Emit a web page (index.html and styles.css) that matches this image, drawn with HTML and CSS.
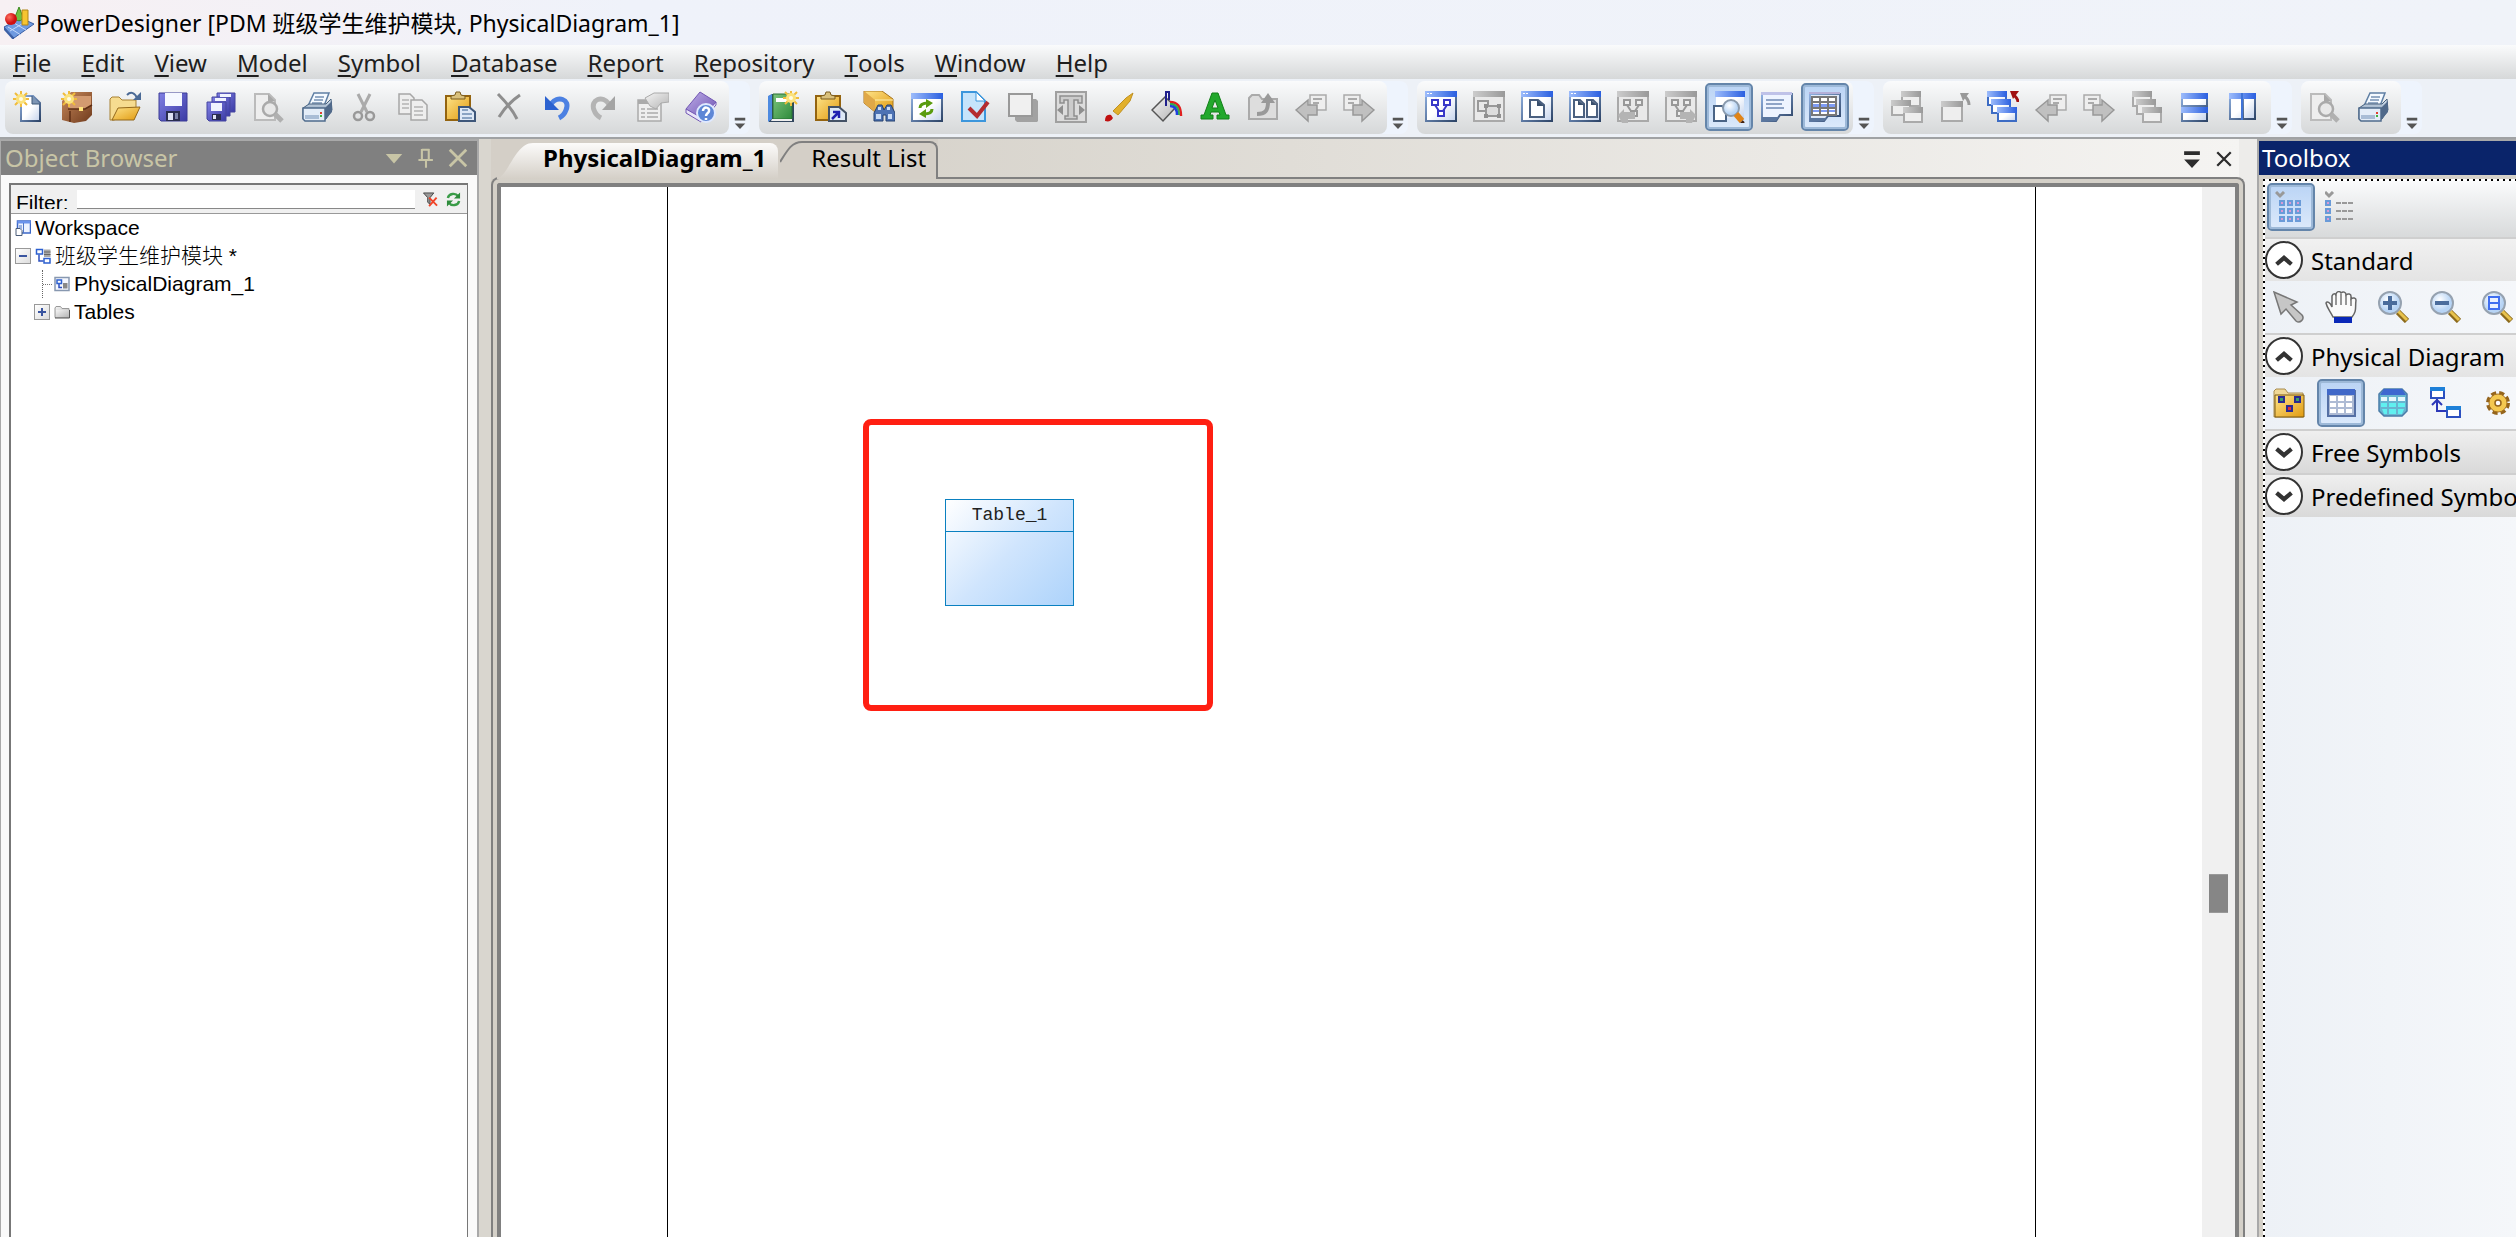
FILE: index.html
```html
<!DOCTYPE html>
<html lang="en">
  <head>
    <meta charset="UTF-8" />
    <meta name="viewport" content="width=device-width, initial-scale=1.0" />
    <title>PowerDesigner [PDM 班级学生维护模块, PhysicalDiagram_1]</title>
    <link rel="stylesheet" href="styles.css">
  </head>
  <body>
    <!-- icon set, all on a 32 x 32 grid -->
    <svg class="defs" width="0" height="0" aria-hidden="true">
      <defs>
        <linearGradient id="gBlue" x2="1"><stop stop-color="#9dbcfb"/><stop offset="1" stop-color="#2a5fe0"/></linearGradient>
        <linearGradient id="gPane" x2="1" y2="1"><stop stop-color="#fff"/><stop offset=".5" stop-color="#fff"/><stop offset="1" stop-color="#c3d2ec"/></linearGradient>
        <linearGradient id="gEdge" x2="1" y2="1"><stop stop-color="#8fb0e0"/><stop offset="1" stop-color="#2e4568"/></linearGradient>
        <linearGradient id="gGrayBar" x2="1"><stop stop-color="#ccc"/><stop offset="1" stop-color="#999"/></linearGradient>
        <linearGradient id="gGray" x2="1" y2="1"><stop stop-color="#f4f4f4"/><stop offset="1" stop-color="#b4b4b4"/></linearGradient>
        <linearGradient id="gGold" x2="1" y2="1"><stop stop-color="#ffe48a"/><stop offset="1" stop-color="#e09a10"/></linearGradient>
        <linearGradient id="gBrown" x2="1" y2="1"><stop stop-color="#c98a5c"/><stop offset="1" stop-color="#6f3a1c"/></linearGradient>
        <linearGradient id="gIndigo" x2="1" y2="1"><stop stop-color="#8080e4"/><stop offset="1" stop-color="#3a3aa4"/></linearGradient>
        <linearGradient id="gSteel" x2="0" y2="1"><stop stop-color="#dde8f4"/><stop offset="1" stop-color="#5b7897"/></linearGradient>
        <linearGradient id="gGreen" x2="1" y2="1"><stop stop-color="#7cc47c"/><stop offset="1" stop-color="#2f8a3c"/></linearGradient>
        <linearGradient id="gPurple" x2="1" y2="1"><stop stop-color="#bfaee8"/><stop offset="1" stop-color="#6a50b0"/></linearGradient>
        <radialGradient id="gRed" cx=".35" cy=".35"><stop stop-color="#ff7060"/><stop offset="1" stop-color="#d01010"/></radialGradient>
        <radialGradient id="gLens" cx=".4" cy=".35"><stop stop-color="#fff"/><stop offset="1" stop-color="#b7d4f5"/></radialGradient>
      </defs>

      <symbol id="star" viewBox="0 0 32 32">
        <path d="M2 2l12 12M14 2L2 14M8 0v16M0 8h16" stroke="#f0bc3c" stroke-width="2" fill="none"/>
        <circle cx="8" cy="8" r="5" fill="#fbe27c"/><circle cx="8" cy="8" r="2" fill="#fffbe0"/>
      </symbol>
      <symbol id="new" viewBox="0 0 32 32">
        <path d="M8 5h12l7 7v18H8z" fill="url(#gPane)" stroke="url(#gEdge)" stroke-width="2"/>
        <path d="M19 5v8h8" fill="#7d95b4" stroke="#3e5878"/>
        <use href="#star" width="32" height="32"/>
      </symbol>
      <symbol id="project" viewBox="0 0 32 32">
        <path d="M1 10L10 1h21v23l-6 6-12 2-12-3z" fill="url(#gBrown)"/>
        <path d="M11 5h19v9l-6 4H7z" fill="#d39a70"/><path d="M7 18h17l7-4M9 31V20" stroke="#5e2e14" stroke-width="1.500" fill="none"/>
        <rect x="18" y="16" width="4" height="4" fill="#ffe27a"/>
        <use href="#star" width="32" height="32"/>
      </symbol>
      <symbol id="open" viewBox="0 0 32 32">
        <path d="M1 8l2-2h7l3 3h14v9L5 29H1z" fill="#f6dc90" stroke="#a78032"/>
        <path d="M9 17l22-1-6 13H3z" fill="url(#gGold)" stroke="#94681a"/>
        <path d="M18 4c4-4 8-2 10 3" fill="none" stroke="#4b6a96" stroke-width="2"/><path d="M32 1v8h-8z" fill="#4b6a96"/>
      </symbol>
      <symbol id="save" viewBox="0 0 32 32">
        <path d="M2 2h28v28H4l-2-2z" fill="url(#gIndigo)" stroke="#3c3c96"/>
        <path d="M8 2h17v13H8z" fill="#f5f8ff"/><path d="M9 20h14v10H9z" fill="#2a2d50"/><path d="M11 22h5v7h-5z" fill="#dfe3f4"/><path d="M18 22h3v6h-3z" fill="#7b82a8"/>
      </symbol>
      <symbol id="saveall" viewBox="0 0 32 32">
        <g fill="url(#gIndigo)" stroke="#4444a0"><path d="M12 2h18v19H12z"/><path d="M7 6h18v19H7z"/><path d="M2 11h19v19H4l-2-2z"/></g>
        <path d="M15 3h11v3H15zM10 7h11v3H10zM6 12h11v8H6z" fill="#f0f3ff"/><path d="M7 23h9v6H7z" fill="#2a2d50"/><path d="M8 24h3v4H8z" fill="#dfe3f4"/>
      </symbol>
      <symbol id="preview" viewBox="0 0 32 32">
        <path d="M2 3h14l6 6v20H2z" fill="#eee" stroke="#bbb" stroke-width="2"/><path d="M15 3v7h7z" fill="#a8a8a8"/>
        <circle cx="17" cy="18" r="7" fill="#e8e8e8" stroke="#aaa" stroke-width="2.500"/><path d="M22 23l7 7" stroke="#b0b0b0" stroke-width="5"/>
      </symbol>
      <symbol id="print" viewBox="0 0 32 32">
        <path d="M13 2h15l-5 13H7z" fill="#f5faff" stroke="#5f7fa4" stroke-width="1.500"/><path d="M14 6h9M13 9h9M11 12h10" stroke="#7691b4" stroke-width="1.500"/>
        <path d="M2 17l6-4h17l5-5 1 11-6 9H2z" fill="url(#gSteel)" stroke="#46617f"/><path d="M2 17h22v13H4l-2-2z" fill="#e4edf8" stroke="#4f6b8c" stroke-width="1.500"/>
        <path d="M24 17l7-7v11l-7 8z" fill="#50698a"/><path d="M4 24h14v4H4z" fill="#a9bdd6"/><path d="M19 21h2v2h-2z" fill="#e04030"/><path d="M19 24h2v2h-2z" fill="#40b040"/>
      </symbol>
      <symbol id="cut" viewBox="0 0 32 32">
        <path d="M9 3l9 18M21 3l-9 18" stroke="#aaa" stroke-width="3" fill="none"/>
        <circle cx="9" cy="25" r="4" fill="none" stroke="#999" stroke-width="2.500"/><circle cx="21" cy="25" r="4" fill="none" stroke="#999" stroke-width="2.500"/>
      </symbol>
      <symbol id="copy" viewBox="0 0 32 32">
        <g fill="#eee" stroke="#a6a6a6" stroke-width="1.500"><path d="M2 3h11l4 4v16H2z"/><path d="M14 9h11l5 5v15H14z"/></g>
        <path d="M5 9h7M5 13h7M5 17h7M17 16h9M17 20h9M17 24h9" stroke="#b4b4b4" stroke-width="1.500"/>
      </symbol>
      <symbol id="paste" viewBox="0 0 32 32">
        <path d="M1 5h24v24H1z" fill="url(#gGold)" stroke="#946410" stroke-width="2"/><path d="M6 8V5l4-1 1-3h4l1 3 4 1v3z" fill="#d9c07c" stroke="#7a5c20"/>
        <path d="M14 16h10l6 5v9H14z" fill="#dde8f6" stroke="#3e577a" stroke-width="2"/><path d="M17 19h6M17 23h10M17 27h10" stroke="#6d8cb2" stroke-width="1.500"/>
      </symbol>
      <symbol id="delete" viewBox="0 0 32 32"><path d="M5 3c7 7 14 15 19 25M27 4C18 10 11 18 6 26" fill="none" stroke="#8e8e8e" stroke-width="3"/></symbol>
      <symbol id="undo" viewBox="0 0 32 32"><path d="M10 13c6-9 20-5 15 6-1 3-3 6-7 8" fill="none" stroke="#4b80e2" stroke-width="5"/><path d="M4 5v14h14z" fill="#2c62d0"/></symbol>
      <symbol id="redo" viewBox="0 0 32 32"><path d="M20 13C14 4 1 8 5 19c1 3 3 6 7 8" fill="none" stroke="#b4b4b4" stroke-width="5"/><path d="M26 5v14H13z" fill="#a4a4a4"/></symbol>
      <symbol id="props" viewBox="0 0 32 32">
        <path d="M1 9h23v21H1z" fill="#eee" stroke="#aaa" stroke-width="1.500"/><path d="M1 9h23v4H1z" fill="#aaa"/>
        <path d="M4 18h4M10 18h11M4 22h4M10 22h11M4 26h4M10 26h11" stroke="#bbb" stroke-width="2"/><path d="M8 7l9-5h15v9l-8 1-5 6-6-3z" fill="url(#gGray)" stroke="#aaa"/>
      </symbol>
      <symbol id="help" viewBox="0 0 32 32">
        <path d="M1 18L15 1l16 10-14 17z" fill="url(#gPurple)" stroke="#7358b4"/><path d="M1 18v4l15 9 15-17v-3L17 27z" fill="#e9e4f8" stroke="#7358b4"/>
        <circle cx="21" cy="22" r="9" fill="#5e87d6" stroke="#dfe9ff" stroke-width="2"/><path d="M18 20c0-5 7-4 6 0 0 2-3 2-3 5M21 27v2" fill="none" stroke="#fff" stroke-width="2.500"/>
      </symbol>

      <symbol id="model" viewBox="0 0 32 32">
        <path d="M2 5l3-2h22v28H2z" fill="#32465e"/><path d="M1 5l4-2v25l-4 3z" fill="#4d8ae0"/><path d="M6 3h19v25H6z" fill="url(#gGreen)" stroke="#286e34"/>
        <path d="M9 7h12v4H9z" fill="#fff"/><path d="M5 28h20v2H4z" fill="#eee"/><g transform="translate(16 -1)"><use href="#star" width="32" height="32"/></g>
      </symbol>
      <symbol id="pastelink" viewBox="0 0 32 32">
        <path d="M1 5h24v24H1z" fill="url(#gGold)" stroke="#946410" stroke-width="2"/><path d="M6 8V5l4-1 1-3h4l1 3 4 1v3z" fill="#d9c07c" stroke="#7a5c20"/>
        <path d="M14 16h10l7 6v8H14z" fill="#dde8f6" stroke="#445266" stroke-width="2"/><path d="M17 28l6-6M18 21h6v6" fill="none" stroke="#2020b0" stroke-width="2.500"/>
      </symbol>
      <symbol id="find" viewBox="0 0 32 32">
        <path d="M1 0h18l11 8v13H12L1 12z" fill="url(#gGold)" stroke="#a8741c"/><path d="M1 0l11 9v12L1 12z" fill="#e0a848"/><path d="M12 9h18" stroke="#fff0b0"/>
        <path d="M11 30V22l4-8h4l2 5 3-5h4l4 8v8h-9v-6h-3v6z" fill="#4d72b4" stroke="#24406e"/><path d="M13 23h5v5h-5zM25 23h4v5h-4zM15 16h3v3h-3zM24 16h3v3h-3z" fill="#c9dcf6"/>
      </symbol>
      <symbol id="pane" viewBox="0 0 32 32">
        <path d="M1 1h30v29H1z" fill="url(#gPane)" stroke="url(#gEdge)" stroke-width="2"/><path d="M0 0h32v6H0z" fill="url(#gBlue)"/><path d="M2 2h2v1H2zM5 2h2v1H5z" fill="#fff"/>
      </symbol>
      <symbol id="panegray" viewBox="0 0 32 32">
        <path d="M1 1h30v29H1z" fill="#e9e9e9" stroke="#a9a9a9" stroke-width="2"/><path d="M0 0h32v6H0z" fill="url(#gGrayBar)"/>
      </symbol>
      <symbol id="refresh" viewBox="0 0 32 32">
        <path d="M1 3h30v27H1z" fill="url(#gPane)" stroke="url(#gEdge)" stroke-width="2"/><path d="M0 2h32v6H0z" fill="url(#gBlue)"/>
        <path d="M9 17c0-4 3-5 8-5M21 18c0 4-3 5-8 5" fill="none" stroke="#5a9c10" stroke-width="3"/><path d="M15 8l7 4-7 5zM15 18v9l-7-4z" fill="#5a9c10"/>
      </symbol>
      <symbol id="check" viewBox="0 0 32 32">
        <path d="M3 1h14l9 9v20H3z" fill="#c6e4fb" stroke="#3c96dc" stroke-width="2"/><path d="M17 1v9h9z" fill="#fff" stroke="#3c96dc"/><path d="M10 17l8 8L29 11" fill="none" stroke="#b42c30" stroke-width="4"/>
      </symbol>
      <symbol id="shadow" viewBox="0 0 32 32"><path d="M8 8h21l2 2v20l-1 1H10l-2-2z" fill="#a2a2a2"/><path d="M2 3h23v22H2z" fill="#f0f0f0" stroke="#999" stroke-width="2"/></symbol>
      <symbol id="textfit" viewBox="0 0 32 32">
        <path d="M1 1h30v30H1z" fill="#dcdcdc" stroke="#a0a0a0" stroke-width="2"/><path d="M5 5h22v7h-4V9h-4v16h3v3H10v-3h3V9H9v3H5z" fill="#ccc" stroke="#8e8e8e" stroke-width="1.500"/><path d="M8 14v10l-6-5zM24 14v10l6-5z" fill="#8e8e8e"/>
      </symbol>
      <symbol id="brush" viewBox="0 0 32 32">
        <path d="M10 20L23 7l7-5-3 8-12 14z" fill="#e2b02c" stroke="#c09020"/><path d="M8 21l6 5-4 3-4-4z" fill="#e4e4e4"/><path d="M2 30c0-5 2-7 6-6l2 3c-2 3-4 4-8 3z" fill="#c01010"/>
      </symbol>
      <symbol id="fill" viewBox="0 0 32 32">
        <path d="M1 19L14 6l11 10-13 14z" fill="url(#gGray)" stroke="#555" stroke-width="1.500"/><path d="M15 15V1h3v8" fill="none" stroke="#20208c" stroke-width="2"/>
        <path d="M19 11c8 0 11 5 11 14" fill="none" stroke="#e02020" stroke-width="2.500"/><path d="M19 13c6 0 9 4 9 11" fill="none" stroke="#30b050" stroke-width="2"/><path d="M19 15c5 0 7 3 7 9" fill="none" stroke="#2040e0" stroke-width="2.500"/>
      </symbol>
      <symbol id="font" viewBox="0 0 32 32">
        <path d="M13 2h6l8 22h3v4H18v-4h3l-1-3h-8l-1 3h3v4H2v-4h3zM13 17h6l-3-8z" fill="#22a82c" stroke="#128018" fill-rule="evenodd"/>
      </symbol>
      <symbol id="folderup" viewBox="0 0 32 32"><path d="M2 7l3-3h7l3 4h15v20H2z" fill="#ddd" stroke="#aaa" stroke-width="2"/><path d="M10 23c8 0 11-3 11-12" fill="none" stroke="#999" stroke-width="4"/><path d="M14 12l7-10 7 10z" fill="#999"/></symbol>
      <symbol id="prev" viewBox="0 0 32 32"><path d="M15 4h16v15H15z" fill="#eee" stroke="#aaa" stroke-width="1.500"/><path d="M18 8h9M18 12h6" stroke="#aaa" stroke-width="2"/><path d="M1 19L13 9v5h9v10h-9v6z" fill="#c0c0c0" stroke="#989898" stroke-width="1.500"/></symbol>
      <symbol id="next" viewBox="0 0 32 32"><path d="M1 4h16v15H1z" fill="#eee" stroke="#aaa" stroke-width="1.500"/><path d="M5 8h9M5 12h6" stroke="#aaa" stroke-width="2"/><path d="M31 19L19 9v5h-9v10h9v6z" fill="#c0c0c0" stroke="#989898" stroke-width="1.500"/></symbol>

      <symbol id="graph" viewBox="0 0 32 32">
        <use href="#pane" width="32" height="32"/><path d="M10 14l4 6M22 14l-4 6" stroke="#3838c8" stroke-width="2"/><g fill="#fff" stroke="#3838c8" stroke-width="2"><path d="M7 9h6v5H7zM19 9h6v5h-6zM13 20h6v5h-6z"/></g>
      </symbol>
      <symbol id="graphgray" viewBox="0 0 32 32">
        <use href="#panegray" width="32" height="32"/><path d="M5 10h10v10H5z" fill="none" stroke="#999" stroke-width="2"/><path d="M13 15h13v10H13z" fill="#ddd" stroke="#999" stroke-width="2"/><path d="M11 13h4v4h-4zM24 13h4v4h-4zM11 23h4v4h-4zM24 23h4v4h-4z" fill="#909090"/>
      </symbol>
      <symbol id="page" viewBox="0 0 32 32"><use href="#pane" width="32" height="32"/><path d="M9 9h8l6 5v12H9z" fill="#fff" stroke="#4a6080" stroke-width="2"/><path d="M16 9v6h7z" fill="#3a506e"/></symbol>
      <symbol id="pages" viewBox="0 0 32 32"><use href="#pane" width="32" height="32"/><path d="M5 9h6l4 4v13H5zM18 9h6l4 4v13H18z" fill="#fff" stroke="#4a6080" stroke-width="2"/><path d="M9 9v5h6zM22 9v5h6z" fill="#3a506e"/></symbol>
      <symbol id="graphleft" viewBox="0 0 32 32"><use href="#panegray" width="32" height="32"/><path d="M10 14l4 6M22 14l-4 6" stroke="#999" stroke-width="2"/><path d="M7 9h6v5H7zM19 9h6v5h-6zM14 20h6v5h-6z" fill="#eee" stroke="#999" stroke-width="2"/><path d="M1 24l6-6v3h11v7h-7v4H5z" fill="#b4b4b4"/></symbol>
      <symbol id="graphright" viewBox="0 0 32 32"><use href="#panegray" width="32" height="32"/><path d="M10 14l4 6M22 14l-4 6" stroke="#999" stroke-width="2"/><path d="M7 9h6v5H7zM19 9h6v5h-6zM12 20h6v5h-6z" fill="#eee" stroke="#999" stroke-width="2"/><path d="M31 24l-6-6v3H15v7h6v4h6z" fill="#b4b4b4"/></symbol>
      <symbol id="zoompage" viewBox="0 0 32 32">
        <g transform="translate(2 0)"><path d="M1 1h28v26H1z" fill="url(#gPane)"/><path d="M0 0h30v6H0z" fill="url(#gBlue)"/></g><path d="M1 15h8l4 4v11H1z" fill="#fff" stroke="#4a6486" stroke-width="2"/>
        <circle cx="18" cy="17" r="8" fill="url(#gLens)" stroke="#8a9aac" stroke-width="2"/><path d="M23 23l6 7" stroke="#e08418" stroke-width="6"/><path d="M28 31l2 2" stroke="#402010" stroke-width="5"/>
      </symbol>
      <symbol id="note" viewBox="0 0 32 32"><path d="M1 3h30v21H19l-4 6H1z" fill="#eef4ff" stroke="url(#gEdge)" stroke-width="2"/><path d="M1 26h17l-3 4H1z" fill="#5a769e"/><path d="M0 1h31v3H0z" fill="#bfc2e8"/><path d="M5 9h18M5 13h16M5 17h18" stroke="#8fa4c6" stroke-width="2"/></symbol>
      <symbol id="grid" viewBox="0 0 32 32"><path d="M1 3h30v22H19l-4 5H1z" fill="#dfe9f8" stroke="url(#gEdge)" stroke-width="2"/><path d="M1 27h17l-3 3H1z" fill="#5a769e"/><path d="M0 1h31v2H0z" fill="#b4b0d8"/><path d="M3 6h24v18H3z" fill="#fff"/><path d="M3 13h24v3H3zM3 19h24v2H3z" fill="#7f9cf4"/><path d="M3 6h24v18H3zM11 6v18M19 6v18M3 11h24M3 17h24" fill="none" stroke="#777" stroke-width="2"/></symbol>

      <symbol id="wingray" viewBox="0 0 32 32"><path d="M1 1h18v14H1z" fill="#eee" stroke="#aaa" stroke-width="2"/><path d="M0 0h20v6H0z" fill="url(#gGrayBar)"/></symbol>
      <symbol id="winblue" viewBox="0 0 32 32"><path d="M1 1h18v13H1z" fill="url(#gPane)" stroke="#3d6cc4" stroke-width="2"/><path d="M0 0h20v6H0z" fill="url(#gBlue)"/></symbol>
      <symbol id="cascadegray" viewBox="0 0 32 32"><use href="#wingray" x="10" y="0" width="32" height="32"/><use href="#wingray" x="0" y="9" width="32" height="32"/><use href="#wingray" x="12" y="16" width="32" height="32"/></symbol>
      <symbol id="winup" viewBox="0 0 32 32"><path d="M3 12h20v18H3z" fill="#eee" stroke="#aaa" stroke-width="2"/><path d="M2 10h22v6H2z" fill="url(#gGrayBar)"/><path d="M30 14c0-4-2-7-5-9" fill="none" stroke="#999" stroke-width="3"/><path d="M21 2h9l-6 8z" fill="#999"/></symbol>
      <symbol id="cascadered" viewBox="0 0 32 32"><use href="#winblue" x="0" y="0" width="32" height="32"/><use href="#winblue" x="4" y="8" width="32" height="32"/><use href="#winblue" x="10" y="16" width="32" height="32"/><path d="M31 11c0-3-2-5-4-7" fill="none" stroke="#a01010" stroke-width="3"/><path d="M23 0h9l-6 8z" fill="#a01010"/></symbol>
      <symbol id="stackgray" viewBox="0 0 32 32"><use href="#wingray" x="1" y="0" width="32" height="32"/><use href="#wingray" x="5" y="8" width="32" height="32"/><use href="#wingray" x="11" y="16" width="32" height="32"/></symbol>
      <symbol id="tileh" viewBox="0 0 32 32"><path d="M3 3h25v12H3zM3 18h25v12H3z" fill="url(#gPane)" stroke="url(#gEdge)" stroke-width="2"/><path d="M2 2h27v6H2zM2 16h27v6H2z" fill="url(#gBlue)"/></symbol>
      <symbol id="tilev" viewBox="0 0 32 32"><path d="M3 3h12v25H3zM16 3h12v25H16z" fill="url(#gPane)" stroke="url(#gEdge)" stroke-width="2"/><path d="M2 2h27v6H2z" fill="url(#gBlue)"/><path d="M15 2v27" stroke="#3f74d8" stroke-width="2"/></symbol>

      <symbol id="viewicons" viewBox="0 0 32 32"><path d="M1 1l4 4 4-4" fill="none" stroke="#999" stroke-width="3"/><g fill="#d99ad4" stroke="#6a9bd8" stroke-width="2"><path d="M5 10h4v4H5zM13 10h4v4h-4zM21 10h4v4h-4zM5 18h4v4H5zM13 18h4v4h-4zM21 18h4v4h-4zM5 26h4v4H5zM13 26h4v4h-4zM21 26h4v4h-4z"/></g></symbol>
      <symbol id="viewlist" viewBox="0 0 32 32"><path d="M0 1l4 4 4-4" fill="none" stroke="#999" stroke-width="3"/><g fill="#d99ad4" stroke="#6a9bd8" stroke-width="2"><path d="M1 10h4v4H1zM1 18h4v4H1zM1 26h4v4H1z"/></g><path d="M11 12h18M11 20h18M11 28h18" stroke="#999" stroke-width="2" stroke-dasharray="5 1"/></symbol>
      <symbol id="pointer" viewBox="0 0 32 32"><path d="M1 1l7 22 5-5 10 12c4 3 9-2 6-6L18 14l6-3z" fill="#c6c6c6" stroke="#777" stroke-width="1.500"/></symbol>
      <symbol id="hand" viewBox="0 0 32 32"><path d="M8 26C5 20 2 17 1 12c1-2 4-1 6 4V5c1-3 4-3 4 0V3c1-3 4-3 5-1 2-2 5-1 5 2 2-2 5-1 5 1v3c2-2 5-1 5 1-1 8 1 11-4 17z" fill="#fafafa" stroke="#666" stroke-width="1.500"/><path d="M11 5v9M16 3v11M21 4v10M26 8v7" stroke="#777" stroke-width="1.500"/><path d="M9 26h18v6H9z" fill="#0a28b8"/></symbol>
      <symbol id="lens" viewBox="0 0 32 32"><path d="M21 21l9 9" stroke="#8c6a1c" stroke-width="6"/><path d="M21 20l9 9" stroke="#e8c24c" stroke-width="3"/><circle cx="13" cy="12" r="11" fill="url(#gLens)" stroke="#96a2b0" stroke-width="2"/></symbol>
      <symbol id="zoomin" viewBox="0 0 32 32"><use href="#lens" width="32" height="32"/><path d="M6 12h14M13 5v14" stroke="#4a6c9c" stroke-width="4"/></symbol>
      <symbol id="zoomout" viewBox="0 0 32 32"><use href="#lens" width="32" height="32"/><path d="M6 12h14" stroke="#4a6c9c" stroke-width="4"/></symbol>
      <symbol id="zoomfit" viewBox="0 0 32 32"><use href="#lens" width="32" height="32"/><path d="M8 6h10v12H8zM8 12h10" fill="#eaf1ff" stroke="#3f6ef0" stroke-width="2"/></symbol>
      <symbol id="package" viewBox="0 0 32 32"><path d="M1 4l2-2h9l3 4h15v24H1z" fill="#f0d898" stroke="#a88c50"/><path d="M2 8h29v22H2z" fill="url(#gGold)" stroke="#7a5810"/><path d="M6 10h5v5H6zM22 10h5v5h-5z" fill="#3aa06a" stroke="#2a2a90" stroke-width="2"/><path d="M14 19h5v5h-5z" fill="#e03030" stroke="#2a2a90" stroke-width="2"/></symbol>
      <symbol id="table" viewBox="0 0 32 32"><path d="M3 4h27v25H3z" fill="#aebbd4" stroke="#5570a4" stroke-width="2"/><path d="M2 2h28v6H2z" fill="#4068c8"/><path d="M5 9h6v5H5zM13 9h6v5h-6zM21 9h6v5h-6zM5 16h6v4H5zM13 16h6v4h-6zM21 16h6v4h-6zM5 22h6v4H5zM13 22h6v4h-6zM21 22h6v4h-6z" fill="#fff"/></symbol>
      <symbol id="view" viewBox="0 0 32 32"><path d="M7 2h18l5 5v17l-5 5H7l-5-5V7z" fill="#68b4d0" stroke="#4a7ca8" stroke-width="1.500"/><path d="M7 2h18l4 6H3z" fill="#3d68d0"/><path d="M4 10h6v4H4zM12 10h7v4h-7zM21 10h7v4h-7z" fill="#e4f8fc"/><path d="M4 16h6v4H4zM12 16h7v4h-7zM21 16h7v4h-7zM5 22h5v5H7zM12 22h7v5h-7zM21 22h6l-2 5h-4z" fill="#60f0f0"/></symbol>
      <symbol id="reference" viewBox="0 0 32 32"><path d="M8 12v12h9M3 18l5-5 5 5" fill="none" stroke="#2c38b8" stroke-width="2"/><g fill="#fff" stroke="#2c50c0" stroke-width="2"><path d="M2 1h13v10H2zM18 20h13v10H18z"/></g><path d="M1 0h15v4H1zM17 19h15v4H17z" fill="#1e80d8"/></symbol>
      <symbol id="gear" viewBox="0 0 32 32"><circle cx="17" cy="16" r="10" fill="none" stroke="#94641c" stroke-width="4" stroke-dasharray="5 3"/><circle cx="17" cy="16" r="9" fill="#f4c850" stroke="#a87420"/><circle cx="17" cy="16" r="3" fill="#fff" stroke="#94641c" stroke-width="1.500"/></symbol>

      <symbol id="app" viewBox="0 0 32 32">
        <path d="M2 20l17-9 13 6-20 14z" fill="#6f9ae0" stroke="#3a5ea4"/><path d="M6 20l13 8M12 16l12 7M8 24l17-10" stroke="#c4d8fa"/><path d="M2 20l10 11v3L2 23z" fill="#3a5ea4"/>
        <path d="M13 10l4-10 4 10c0 5-8 5-8 0z" fill="#6fc040" stroke="#3c8a20"/><path d="M20 3h6v15h-6z" fill="#f6c430" stroke="#b08418"/><circle cx="9" cy="12" r="6" fill="url(#gRed)"/>
      </symbol>
      <symbol id="pin" viewBox="0 0 32 32"><path d="M10 3v15M10 4h11M20 3v15M5 19h21M16 19v11" fill="none" stroke="currentColor" stroke-width="3"/></symbol>
      <symbol id="cross" viewBox="0 0 32 32"><path d="M4 4l24 24M28 4L4 28" fill="none" stroke="currentColor" stroke-width="4"/></symbol>
      <symbol id="down" viewBox="0 0 32 32"><path d="M4 10h24L16 24z" fill="currentColor"/></symbol>
      <symbol id="more" viewBox="0 0 32 32"><path d="M2 2h28v7H2zM2 17h28L16 32z" fill="currentColor"/></symbol>
      <symbol id="nofilter" viewBox="0 0 32 32"><path d="M1 2h22l-8 10v14l-5-4V12z" fill="#999" stroke="#444" stroke-width="2"/><path d="M13 12l17 17M29 12L13 30" stroke="#f04428" stroke-width="4"/></symbol>
      <symbol id="reload" viewBox="0 0 32 32"><path d="M4 13C6 3 20 1 26 9M28 19c-2 10-16 12-22 4" fill="none" stroke="#3a9c48" stroke-width="5"/><path d="M30 1v13H17zM2 31V18h13z" fill="#2e8c3c"/></symbol>
      <symbol id="workspace" viewBox="0 0 32 32"><path d="M5 2h26v24H5z" fill="#eef3ff" stroke="#3c68c8" stroke-width="3"/><path d="M5 2h26v5H5z" fill="#6c94ec"/><path d="M17 6v20M8 12h6M8 16h6" stroke="#5078c8" stroke-width="2"/><path d="M2 17h8l4 4v10H2z" fill="#fff" stroke="#4a5c78" stroke-width="2"/></symbol>
      <symbol id="pdm" viewBox="0 0 32 32"><path d="M8 13v13h9" fill="none" stroke="#2c50c0" stroke-width="3"/><path d="M3 3h12v9H3zM18 21h12v9H18z" fill="#fff" stroke="#2c60d0" stroke-width="3"/><path d="M18 3h13v15H18z" fill="#a8a8a8"/><path d="M18 8h13M18 13h13" stroke="#666" stroke-width="2"/></symbol>
      <symbol id="diagram" viewBox="0 0 32 32"><path d="M2 3h28v26H2z" fill="#f4f7ff" stroke="#8898b0" stroke-width="3"/><path d="M6 8h9v7H6z" fill="#fff" stroke="#2c60d0" stroke-width="3"/><path d="M10 16v7h6" fill="none" stroke="#2c50c0" stroke-width="3"/><path d="M18 14h9v11h-9z" fill="#888"/></symbol>
      <symbol id="folder" viewBox="0 0 32 32"><path d="M2 27V8l2-3h9l3 4h14v18z" fill="url(#gGray)" stroke="#999" stroke-width="2"/><path d="M4 12h26v15H4z" fill="url(#gGray)"/><path d="M2 28h29V12" fill="none" stroke="#555" stroke-width="2"/></symbol>
      <symbol id="plus" viewBox="0 0 32 32"><path d="M8 16h16M16 8v16" stroke="#3a55a0" stroke-width="4"/></symbol>
      <symbol id="minus" viewBox="0 0 32 32"><path d="M8 16h16" stroke="#3a55a0" stroke-width="4"/></symbol>
      <symbol id="chevup" viewBox="0 0 32 32"><path d="M9 20l7-6 7 6" fill="none" stroke="#333" stroke-width="4"/></symbol>
      <symbol id="chevdown" viewBox="0 0 32 32"><path d="M9 13l7 6 7-6" fill="none" stroke="#333" stroke-width="4"/></symbol>
    </svg>

    <header class="titlebar">
      <svg class="icon"><use href="#app"/></svg>
      <h1>PowerDesigner [PDM 班级学生维护模块, PhysicalDiagram_1]</h1>
    </header>

    <nav class="menubar">
      <button><u>F</u>ile</button>
      <button><u>E</u>dit</button>
      <button><u>V</u>iew</button>
      <button><u>M</u>odel</button>
      <button><u>S</u>ymbol</button>
      <button><u>D</u>atabase</button>
      <button><u>R</u>eport</button>
      <button><u>R</u>epository</button>
      <button><u>T</u>ools</button>
      <button><u>W</u>indow</button>
      <button><u>H</u>elp</button>
    </nav>

    <div class="toolbars">
      <div class="toolbar">
        <div class="strip">
          <button class="tool" title="New Model"><svg class="icon"><use href="#new"/></svg></button>
          <button class="tool" title="New Project"><svg class="icon"><use href="#project"/></svg></button>
          <button class="tool" title="Open"><svg class="icon"><use href="#open"/></svg></button>
          <button class="tool" title="Save"><svg class="icon"><use href="#save"/></svg></button>
          <button class="tool" title="Save All"><svg class="icon"><use href="#saveall"/></svg></button>
          <button class="tool" title="Print Preview"><svg class="icon"><use href="#preview"/></svg></button>
          <button class="tool" title="Print"><svg class="icon"><use href="#print"/></svg></button>
          <button class="tool" title="Cut"><svg class="icon"><use href="#cut"/></svg></button>
          <button class="tool" title="Copy"><svg class="icon"><use href="#copy"/></svg></button>
          <button class="tool" title="Paste"><svg class="icon"><use href="#paste"/></svg></button>
          <button class="tool" title="Delete"><svg class="icon"><use href="#delete"/></svg></button>
          <button class="tool" title="Undo"><svg class="icon"><use href="#undo"/></svg></button>
          <button class="tool" title="Redo"><svg class="icon"><use href="#redo"/></svg></button>
          <button class="tool" title="Properties"><svg class="icon"><use href="#props"/></svg></button>
          <button class="tool" title="Help"><svg class="icon"><use href="#help"/></svg></button>
        </div>
        <button class="overflow" title="Toolbar Options"><svg><use href="#more"/></svg></button>
      </div>
      <div class="toolbar">
        <div class="strip">
          <button class="tool" title="Model Properties"><svg class="icon"><use href="#model"/></svg></button>
          <button class="tool" title="Paste as Shortcut"><svg class="icon"><use href="#pastelink"/></svg></button>
          <button class="tool" title="Find Objects"><svg class="icon"><use href="#find"/></svg></button>
          <button class="tool" title="Refresh"><svg class="icon"><use href="#refresh"/></svg></button>
          <button class="tool" title="Check Model"><svg class="icon"><use href="#check"/></svg></button>
          <button class="tool" title="Shadow"><svg class="icon"><use href="#shadow"/></svg></button>
          <button class="tool" title="Adjust to Text"><svg class="icon"><use href="#textfit"/></svg></button>
          <button class="tool" title="Line Style"><svg class="icon"><use href="#brush"/></svg></button>
          <button class="tool" title="Fill"><svg class="icon"><use href="#fill"/></svg></button>
          <button class="tool" title="Font"><svg class="icon"><use href="#font"/></svg></button>
          <button class="tool" title="Up One Level"><svg class="icon"><use href="#folderup"/></svg></button>
          <button class="tool" title="Previous Diagram"><svg class="icon"><use href="#prev"/></svg></button>
          <button class="tool" title="Next Diagram"><svg class="icon"><use href="#next"/></svg></button>
        </div>
        <button class="overflow" title="Toolbar Options"><svg><use href="#more"/></svg></button>
      </div>
      <div class="toolbar">
        <div class="strip">
          <button class="tool" title="View Diagram"><svg class="icon"><use href="#graph"/></svg></button>
          <button class="tool" title="View Selection"><svg class="icon"><use href="#graphgray"/></svg></button>
          <button class="tool" title="View Page"><svg class="icon"><use href="#page"/></svg></button>
          <button class="tool" title="View Pages"><svg class="icon"><use href="#pages"/></svg></button>
          <button class="tool" title="Previous View"><svg class="icon"><use href="#graphleft"/></svg></button>
          <button class="tool" title="Next View"><svg class="icon"><use href="#graphright"/></svg></button>
          <button class="tool active" title="Browser"><svg class="icon"><use href="#zoompage"/></svg></button>
          <button class="tool" title="Output"><svg class="icon"><use href="#note"/></svg></button>
          <button class="tool active" title="Result List"><svg class="icon"><use href="#grid"/></svg></button>
        </div>
        <button class="overflow" title="Toolbar Options"><svg><use href="#more"/></svg></button>
      </div>
      <div class="toolbar">
        <div class="strip">
          <button class="tool" title="Arrange"><svg class="icon"><use href="#cascadegray"/></svg></button>
          <button class="tool" title="Restore"><svg class="icon"><use href="#winup"/></svg></button>
          <button class="tool" title="Close All"><svg class="icon"><use href="#cascadered"/></svg></button>
          <button class="tool" title="Previous Window"><svg class="icon"><use href="#prev"/></svg></button>
          <button class="tool" title="Next Window"><svg class="icon"><use href="#next"/></svg></button>
          <button class="tool" title="Cascade"><svg class="icon"><use href="#stackgray"/></svg></button>
          <button class="tool" title="Tile Horizontally"><svg class="icon"><use href="#tileh"/></svg></button>
          <button class="tool" title="Tile Vertically"><svg class="icon"><use href="#tilev"/></svg></button>
        </div>
        <button class="overflow" title="Toolbar Options"><svg><use href="#more"/></svg></button>
      </div>
      <div class="toolbar">
        <div class="strip">
          <button class="tool" title="Report Preview"><svg class="icon"><use href="#preview"/></svg></button>
          <button class="tool" title="Print Report"><svg class="icon"><use href="#print"/></svg></button>
        </div>
        <button class="overflow" title="Toolbar Options"><svg><use href="#more"/></svg></button>
      </div>
    </div>

    <div class="workarea">
      <aside class="browser">
        <div class="browser-title">
          <h2>Object Browser</h2>
          <button title="Menu"><svg><use href="#down"/></svg></button>
          <button title="Auto Hide"><svg><use href="#pin"/></svg></button>
          <button title="Close"><svg><use href="#cross"/></svg></button>
        </div>
        <div class="browser-body">
          <div class="filter">
            <label for="filter">Filter:</label>
            <input id="filter" type="text">
            <button title="Clear Filter"><svg><use href="#nofilter"/></svg></button>
            <button title="Apply Filter"><svg><use href="#reload"/></svg></button>
          </div>
          <ul class="tree">
            <li><div class="row"><svg><use href="#workspace"/></svg><span>Workspace</span></div></li>
            <li>
              <div class="row"><button class="expander" title="Collapse"><svg><use href="#minus"/></svg></button><svg><use href="#pdm"/></svg><span class="model-name">班级学生维护模块 *</span></div>
              <ul>
                <li><div class="row leaf"><svg><use href="#diagram"/></svg><span>PhysicalDiagram_1</span></div></li>
                <li><div class="row"><button class="expander" title="Expand"><svg><use href="#plus"/></svg></button><svg><use href="#folder"/></svg><span>Tables</span></div></li>
              </ul>
            </li>
          </ul>
        </div>
      </aside>

      <main class="document">
        <div class="tabrow">
          <div class="tabs">
            <button class="tab selected">
              <svg viewBox="0 0 36 36">
                <linearGradient id="gTab" x2="0" y2="1"><stop stop-color="#fcfbfa"/><stop offset="1" stop-color="#d4cfc7"/></linearGradient>
                <path d="M0 36C12 32 18 0 36 0v36z" fill="url(#gTab)"/>
              </svg>
              <span>PhysicalDiagram_1</span>
            </button>
            <button class="tab">
              <svg viewBox="0 0 22 38"><path d="M0 21C8 8 12 1 22 1" fill="none" stroke="#808080" stroke-width="2"/></svg>
              <span>Result List</span>
            </button>
          </div>
          <div class="tab-actions">
            <button title="Active Files"><svg><use href="#more"/></svg></button>
            <button title="Close"><svg><use href="#cross"/></svg></button>
          </div>
        </div>
        <div class="frame">
          <div class="viewport">
            <div class="canvas">
              <div class="sheet"></div>
              <div class="highlight"></div>
              <div class="entity"><div class="entity-name">Table_1</div></div>
            </div>
            <div class="scrollbar"><div class="thumb"></div></div>
          </div>
        </div>
      </main>

      <aside class="toolbox">
        <h2>Toolbox</h2>
        <div class="toolbox-body">
          <div class="toolbox-modes">
            <button class="tool active" title="Icons"><svg class="icon"><use href="#viewicons"/></svg></button>
            <button class="tool" title="List"><svg class="icon"><use href="#viewlist"/></svg></button>
          </div>
          <button class="group"><svg><use href="#chevup"/></svg>Standard</button>
          <div class="palette">
            <button class="tool" title="Pointer"><svg class="icon"><use href="#pointer"/></svg></button>
            <button class="tool" title="Grabber"><svg class="icon"><use href="#hand"/></svg></button>
            <button class="tool" title="Zoom In"><svg class="icon"><use href="#zoomin"/></svg></button>
            <button class="tool" title="Zoom Out"><svg class="icon"><use href="#zoomout"/></svg></button>
            <button class="tool" title="Open Diagram"><svg class="icon"><use href="#zoomfit"/></svg></button>
          </div>
          <button class="group"><svg><use href="#chevup"/></svg>Physical Diagram</button>
          <div class="palette">
            <button class="tool" title="Package"><svg class="icon"><use href="#package"/></svg></button>
            <button class="tool active" title="Table"><svg class="icon"><use href="#table"/></svg></button>
            <button class="tool" title="View"><svg class="icon"><use href="#view"/></svg></button>
            <button class="tool" title="Reference"><svg class="icon"><use href="#reference"/></svg></button>
            <button class="tool" title="Procedure"><svg class="icon"><use href="#gear"/></svg></button>
          </div>
          <button class="group closed"><svg><use href="#chevdown"/></svg>Free Symbols</button>
          <button class="group closed"><svg><use href="#chevdown"/></svg>Predefined Symbols</button>
        </div>
      </aside>
    </div>
  </body>
</html>
```

FILE: styles.css
```css
* {
  box-sizing: border-box;
}
body {
  margin: 0;
  height: 100vh;
  display: flex;
  flex-direction: column;
  overflow: hidden;
  font-family: "Noto Sans", "Noto Sans CJK SC", sans-serif;
  font-size: 24px;
  color: #000;
  background: #edf1f7;
}
button {
  display: flex;
  align-items: center;
  justify-content: center;
  margin: 0;
  padding: 0;
  border: none;
  background: none;
  font: inherit;
  color: inherit;
}
h1,
h2 {
  margin: 0;
  font-size: 24px;
  font-weight: normal;
}
svg {
  display: block;
  flex: none;
}
.defs {
  position: absolute;
}
.icon {
  width: 32px;
  height: 32px;
}

/* title bar and menus */
.titlebar {
  display: flex;
  align-items: center;
  gap: 2px;
  height: 45px;
  padding-left: 2px;
  background: linear-gradient(90deg, #f7f0f3, #eff2fa 25%, #f0f3f9);
}
.titlebar h1 {
  font-size: 23px;
  line-height: 32px;
}
.menubar {
  display: flex;
  gap: 30px;
  height: 34px;
  padding-left: 13px;
  background: linear-gradient(#fafbfc, #d6d8d9);
  color: #1e1e1e;
}
.menubar u {
  text-decoration-thickness: 2px;
  text-underline-offset: 3px;
}

/* toolbars */
.toolbars {
  display: flex;
  gap: 9px;
  height: 60px;
  padding: 2px 0 3px 5px;
  border-bottom: 2px solid #a0a2a4;
}
.toolbar {
  display: flex;
  border-radius: 8px;
  background: #eef4fd;
}
.strip {
  display: flex;
  padding: 2px 4px 0 0;
  border-radius: 8px;
  background: linear-gradient(#fafbfc, #d6d8d9);
}
.tool {
  width: 48px;
  height: 48px;
  flex: none;
}
.tool.active {
  border: 2px solid #6485aa;
  border-radius: 5px;
  box-shadow: inset 0 0 0 2px #9db9d8;
  background: linear-gradient(#bad4f5, #dceafb);
}
.overflow {
  width: 21px;
  align-items: flex-end;
  padding-bottom: 5px;
  color: #555;
}
.overflow svg {
  width: 12px;
  height: 12px;
}

.workarea {
  flex: 1;
  min-height: 0;
  display: flex;
}

/* object browser */
.browser {
  width: 479px;
  display: flex;
  flex-direction: column;
  border: solid #a9a9a9;
  border-width: 2px 2px 0 1px;
  background: #fafafa;
}
.browser-title {
  display: flex;
  gap: 8px;
  height: 34px;
  padding: 0 7px 0 4px;
  background: #808080;
  color: #c8c5a6;
}
.browser-title h2 {
  flex: 1;
  line-height: 34px;
}
.browser-title button {
  width: 24px;
}
.browser-title svg {
  width: 22px;
  height: 22px;
}
.browser-body {
  flex: 1;
  margin: 8px 9px 0 8px;
  border: solid #777;
  border-width: 2px 1px 0 2px;
  background: #fff;
  font-family: "Liberation Sans", "Noto Sans CJK SC", sans-serif;
  font-size: 21px;
}
.filter {
  display: flex;
  align-items: center;
  gap: 8px;
  height: 29px;
  padding: 0 6px 0 5px;
  border-bottom: 1px solid #999;
  background: #f0f0f0;
}
.filter label {
  align-self: flex-start;
  height: 24px;
  padding-top: 5px;
  line-height: 26px;
  overflow: hidden;
}
.filter input {
  flex: 1;
  min-width: 0;
  height: 19px;
  border: none;
  border-bottom: 1px solid #888;
  background: #fff;
}
.filter svg {
  width: 15px;
  height: 15px;
}
.tree,
.tree ul {
  margin: 0;
  padding: 0;
  list-style: none;
}
.tree {
  padding-left: 4px;
}
.tree ul {
  padding-left: 19px;
}
.row {
  display: flex;
  align-items: center;
  gap: 4px;
  height: 28px;
  line-height: 28px;
}
.row svg {
  width: 16px;
  height: 16px;
}
.row.leaf {
  border-left: 1px dotted #666;
  margin-left: 8px;
  padding-left: 11px;
  background: repeating-linear-gradient(90deg, #777 0 1px, #fff 1px 2px) 0 14px / 10px 1px no-repeat;
}
.model-name {
  font-weight: 300;
}
.expander {
  width: 16px;
  height: 16px;
  border: 1px solid #999;
  background: linear-gradient(135deg, #fff, #ddd);
}

/* document area */
.document {
  flex: 1;
  min-width: 0;
  display: flex;
  flex-direction: column;
  padding: 0 12px;
  background: linear-gradient(90deg, #d9d6cf 12px, #d4cfc7 12px, #d6d2ca 20%, #f5f4f2 99%, #edecea 99%);
}
.tabrow {
  display: flex;
  justify-content: space-between;
  height: 40px;
  margin-bottom: -2px;
  padding-right: 12px;
}
.tabs {
  display: flex;
  align-items: flex-end;
  margin-left: 6px;
  padding-top: 2px;
  background: #d4cfc7;
  z-index: 1;
}
.tab {
  height: 38px;
}
.tab svg {
  width: 22px;
  height: 38px;
}
.tab span {
  height: 38px;
  padding: 0 10px 0 9px;
  border: solid #808080;
  border-width: 2px 2px 0 0;
  border-radius: 0 8px 0 0;
  line-height: 30px;
}
.tab.selected {
  height: 36px;
  margin-right: 2px;
  font-weight: bold;
}
.tab.selected svg {
  width: 36px;
  height: 36px;
}
.tab.selected span {
  height: 36px;
  border: none;
  padding: 0 12px 0 10px;
  background: linear-gradient(#fcfbfa, #d4cfc7);
}
.tab-actions {
  display: flex;
  align-items: center;
  gap: 14px;
  color: #2c2c2c;
}
.tab-actions svg {
  width: 18px;
  height: 18px;
}
.frame {
  flex: 1;
  display: flex;
  border: solid #808080;
  border-width: 2px 2px 0;
  border-radius: 8px 8px 0 0;
  padding: 4px 4px 0;
  background: #d4d0c8;
}
.viewport {
  flex: 1;
  display: flex;
  border: solid #808080;
  border-width: 4px 4px 0;
  border-radius: 3px 3px 0 0;
}
.canvas {
  position: relative;
  flex: 1;
  padding: 0 166px;
  background: #fff;
}
.sheet {
  height: 100%;
  border: solid #000;
  border-width: 0 1px;
}
.highlight {
  position: absolute;
  left: 362px;
  top: 232px;
  width: 350px;
  height: 292px;
  border: 6px solid #ff1f12;
  border-radius: 8px;
}
.entity {
  position: absolute;
  left: 444px;
  top: 312px;
  width: 129px;
  height: 107px;
  border: 1px solid #0a80c0;
  background: linear-gradient(135deg, #fff, #d0e5fd 50%, #add3fb);
}
.entity-name {
  height: 32px;
  border-bottom: 1px solid #0a80c0;
  font-family: "Liberation Mono", monospace;
  font-size: 18px;
  line-height: 30px;
  text-align: center;
  color: #222;
}
.scrollbar {
  width: 33px;
  padding: 687px 7px 0;
  background: #f0f0f0;
}
.thumb {
  height: 39px;
  border: solid #999;
  border-width: 1px 0;
  background: #868686;
}

/* toolbox */
.toolbox {
  width: 259px;
  display: flex;
  flex-direction: column;
  border: solid #a9a9a9;
  border-width: 2px 0 0 2px;
  background: #d4d0c8;
}
.toolbox h2 {
  height: 34px;
  padding-left: 3px;
  background: #0a246a;
  color: #fff;
  line-height: 34px;
}
.toolbox-body {
  flex: 1;
  margin: 4px 0 0 4px;
  padding: 2px 0 0 2px;
  overflow: hidden;
  background:
    repeating-linear-gradient(90deg, #000 0 2px, #fff 2px 6px) 0 0 / 100% 2px no-repeat,
    repeating-linear-gradient(#000 0 2px, #fff 2px 6px) 0 0 / 2px 100% no-repeat,
    linear-gradient(90deg, #edf1f6, #f5f7fa);
}
.toolbox-modes {
  display: flex;
  gap: 2px;
  height: 56px;
  padding: 2px;
  background: linear-gradient(#fafbfc, #d8dadb);
}
.group {
  width: 100%;
  height: 44px;
  justify-content: flex-start;
  gap: 8px;
  border-top: 2px solid #cfcfcf;
  background: linear-gradient(#f1f1f1, #e4e4e4);
  white-space: nowrap;
}
.group.closed {
  background: linear-gradient(#efefef, #d9d9d9);
}
.group svg {
  width: 38px;
  height: 38px;
  border: 2px solid #333;
  border-radius: 50%;
  background: #fff;
}
.palette {
  display: flex;
  gap: 4px;
  height: 52px;
  padding: 2px 0;
}
```
